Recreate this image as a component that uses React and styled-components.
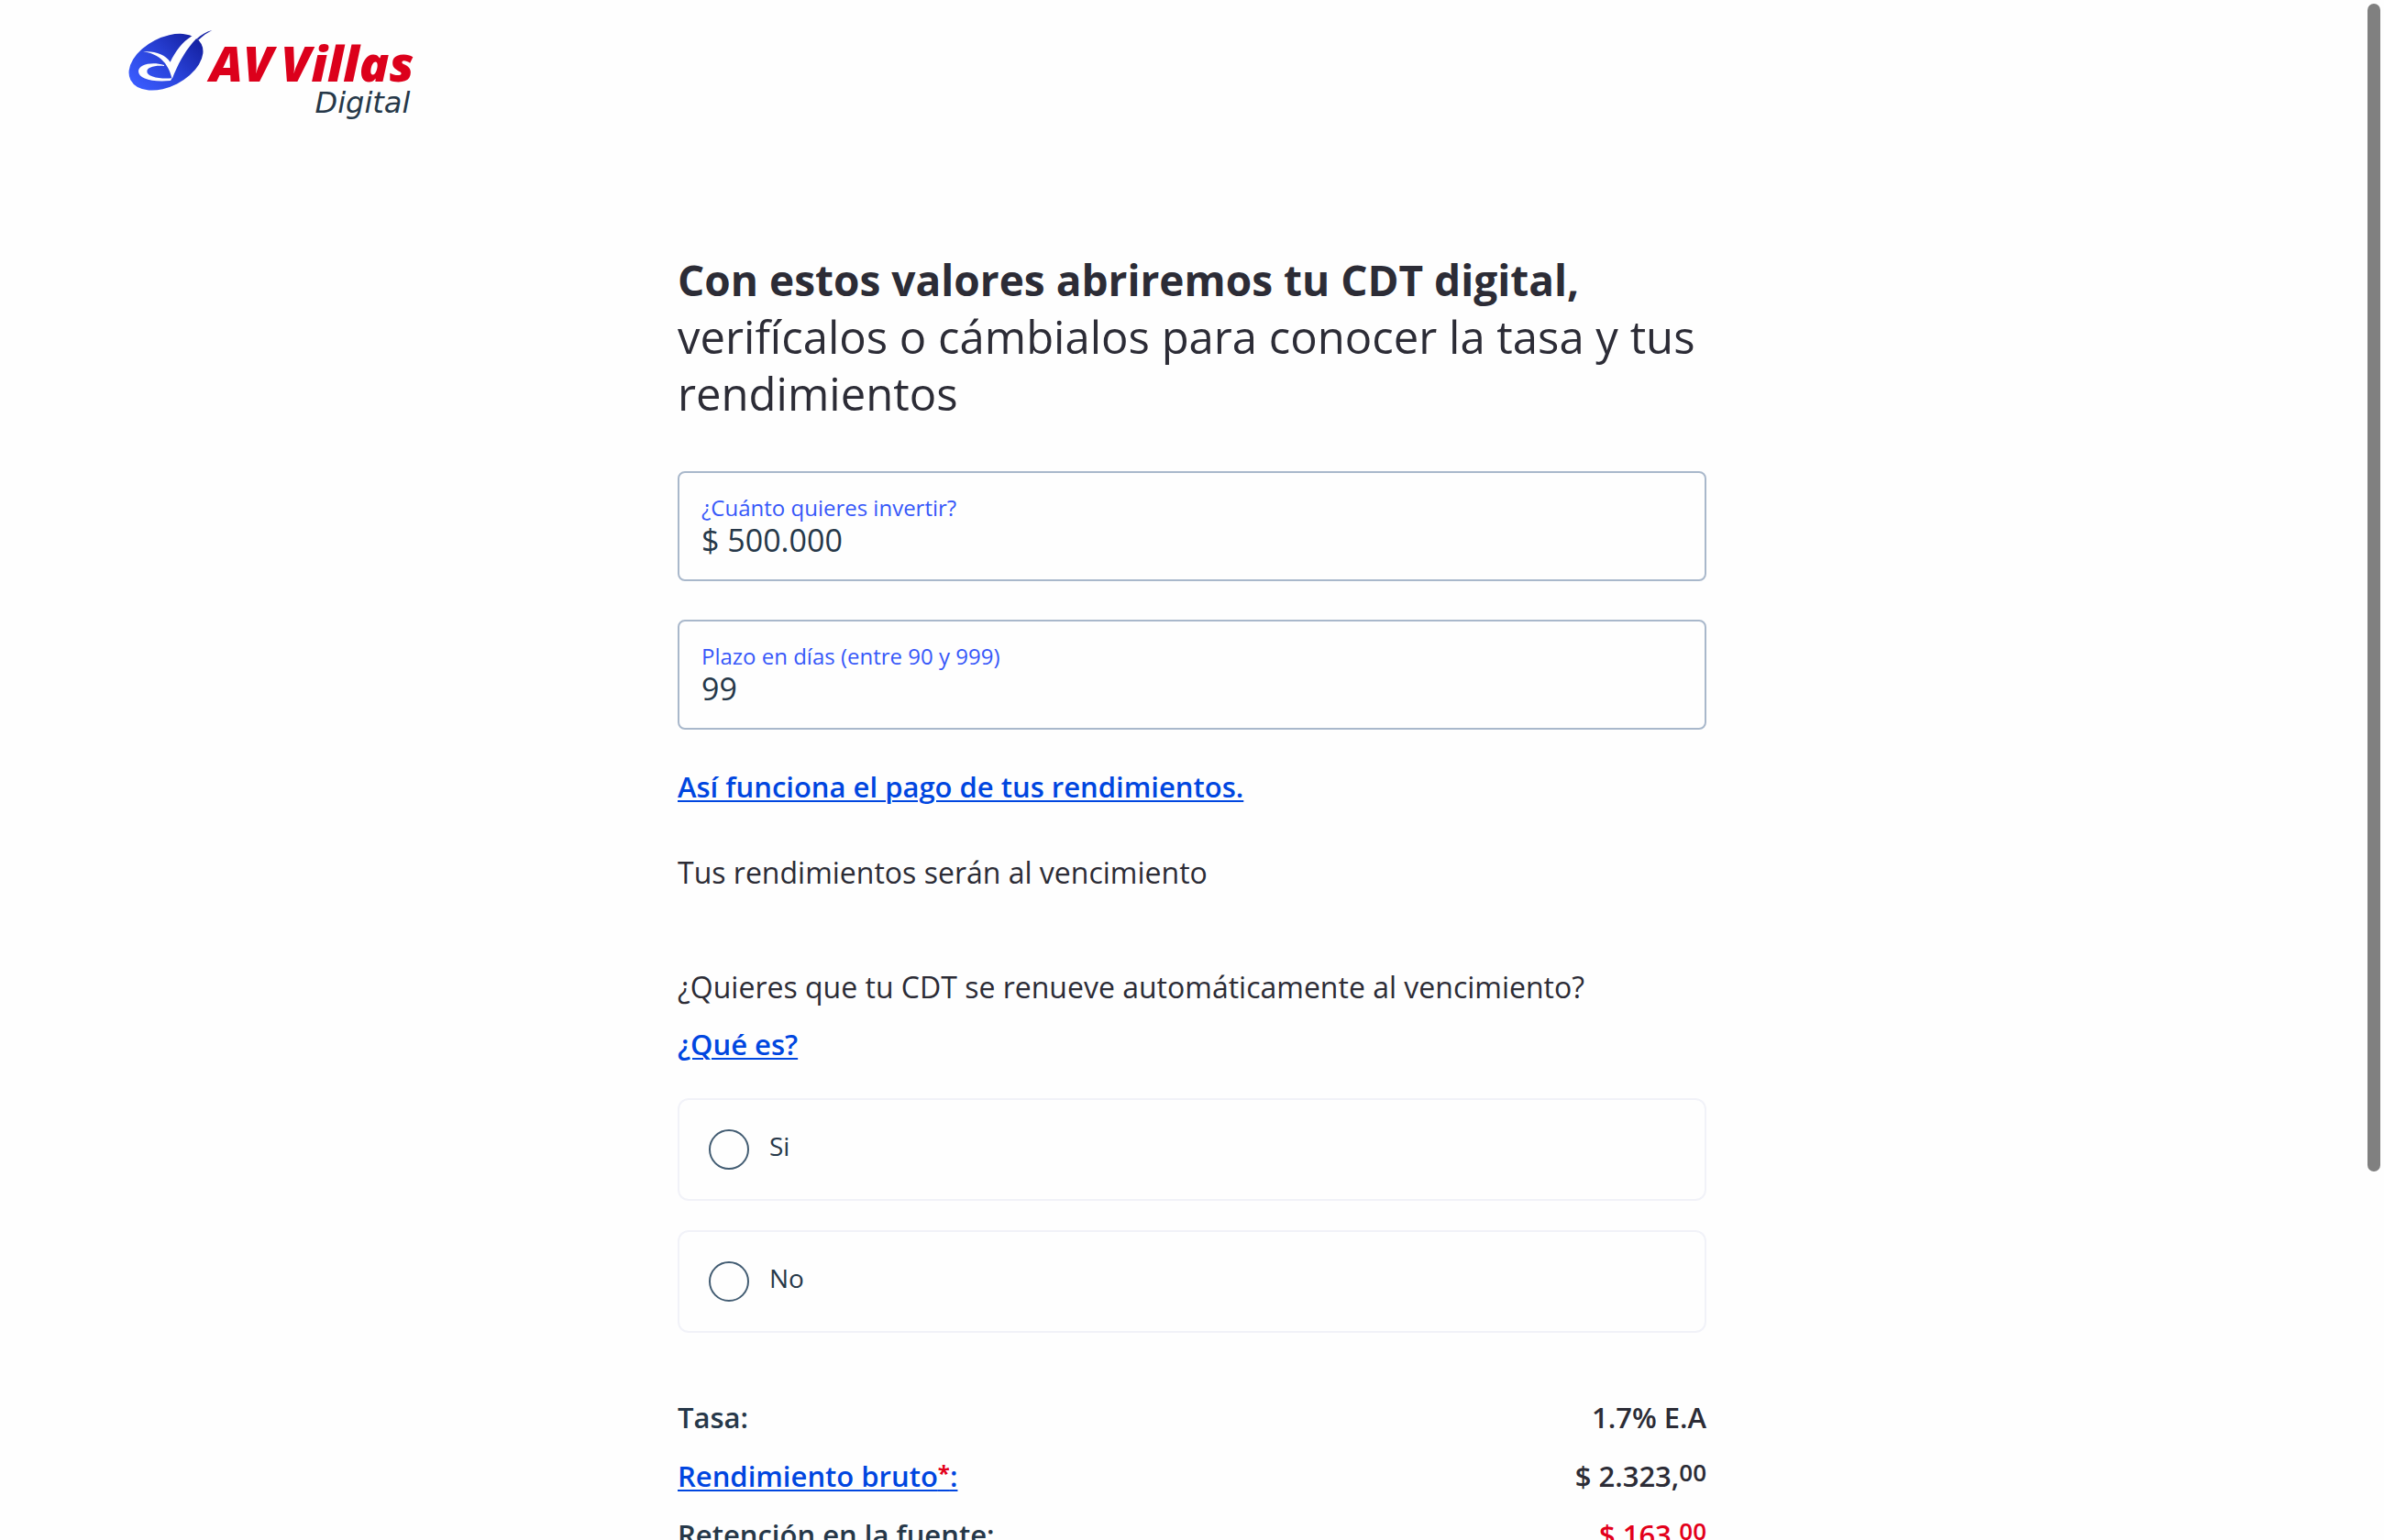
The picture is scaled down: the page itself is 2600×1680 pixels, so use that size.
import React, { useId, useState } from "react";
import styled, { createGlobalStyle } from "styled-components";

const color = {
  ink: "#2c2c36",
  navy: "#263849",
  link: "#0046e0",
  accent: "#3758f9",
  red: "#e3001b",
  logoRed: "#dc001b",
  fieldBorder: "#a9b8cb",
  optionBorder: "#f1f2f8",
  radio: "#425c72",
  thumb: "#808080",
};

const GlobalStyle = createGlobalStyle`
  *, *::before, *::after { box-sizing: border-box; }
  body {
    margin: 0;
    background: #fefefe;
    color: ${color.ink};
    font-family: "Open Sans", "Noto Sans", sans-serif;
    font-size: 32px;
  }
`;

const Page = styled.div`
  height: 100vh;
  overflow-y: auto;
  scrollbar-width: none;
`;

const ScrollThumb = styled.div`
  position: fixed;
  top: 4px;
  right: 4px;
  width: 14px;
  height: 76vh;
  max-height: 1274px;
  border-radius: 7px;
  background: ${color.thumb};
`;

const Header = styled.header`
  display: flex;
  padding: 30px 140px 0;
`;

const LogoLink = styled.a`
  display: block;
  line-height: 0;
`;

const Main = styled.main`
  width: 100%;
  max-width: 1122px;
  margin: 0 auto;
  padding-top: 140px;
`;

const Title = styled.h1`
  margin: 0 0 54px;
  font-size: 49px;
  font-weight: 400;
  line-height: 62px;

  strong {
    display: block;
    font-size: 46px;
    font-weight: 700;
  }
`;

const Fields = styled.div`
  display: flex;
  flex-direction: column;
  gap: 42px;
  margin-bottom: 42px;
`;

const FieldBox = styled.div`
  display: flex;
  flex-direction: column;
  padding: 24px 24px 22px;
  border: 2px solid ${color.fieldBorder};
  border-radius: 8px;
`;

const FieldLabel = styled.label`
  color: ${color.accent};
  font-size: 24px;
  line-height: 28px;
`;

const FieldInput = styled.input`
  width: 100%;
  height: 42px;
  padding: 0;
  border: 0;
  outline: 0;
  background: transparent;
  color: ${color.navy};
  font: inherit;
  font-size: 34px;
  line-height: 42px;
`;

const TextLink = styled.a`
  color: ${color.link};
  font-size: 31px;
  font-weight: 600;
  text-decoration: underline;
  text-decoration-thickness: 2px;
  text-underline-offset: 3px;
`;

const Paragraph = styled.p`
  margin: 0 0 54px;
  line-height: 40px;
`;

const Group = styled.fieldset`
  display: flex;
  flex-direction: column;
  gap: 32px;
  margin: 74px 0 60px;
  padding: 0;
  border: 0;
`;

const Question = styled.legend`
  margin-bottom: 28px;
  padding: 0;
  line-height: 62px;

  a {
    display: table;
  }
`;

const Option = styled.label`
  display: flex;
  align-items: center;
  gap: 22px;
  height: 112px;
  padding: 0 32px;
  border: 2px solid ${color.optionBorder};
  border-radius: 12px;
  color: ${color.navy};
  font-size: 28px;
`;

const OptionText = styled.span`
  padding-bottom: 8px;
`;

const Radio = styled.input`
  appearance: none;
  flex: none;
  width: 44px;
  height: 44px;
  margin: 0;
  border: 2px solid ${color.radio};
  border-radius: 50%;

  &:checked {
    background: radial-gradient(${color.link} 0 10px, transparent 11px);
  }
`;

const Summary = styled.table`
  width: 100%;
  border-collapse: collapse;
  font-size: 31px;
  line-height: 64px;
`;

const SummaryLabel = styled.th`
  padding: 0;
  color: ${color.navy};
  font-weight: 600;
  text-align: left;
`;

const SummaryValue = styled.td`
  padding: 0;
  color: ${(p) => (p.$negative ? color.red : color.ink)};
  font-weight: 600;
  text-align: right;
`;

const Cents = styled.sup`
  font-size: 26px;
  line-height: 0;
  vertical-align: 6px;
`;

const Asterisk = styled.span`
  color: ${color.red};
  font-size: 24px;
  font-weight: 700;
  line-height: 0;
  vertical-align: 6px;
`;

function Logo() {
  return (
    <svg width="314" height="104" viewBox="60 60 942 312" role="img" aria-label="AV Villas Digital">
      <defs>
        <linearGradient id="oval" x1="0" y1="0.6" x2="1" y2="0.4">
          <stop offset="0" stopColor="#3a5cff" />
          <stop offset="0.5" stopColor="#2942d8" />
          <stop offset="1" stopColor="#1420a0" />
        </linearGradient>
      </defs>
      <ellipse cx="183" cy="173" rx="130" ry="80" transform="rotate(-27 183 173)" fill="url(#oval)" />
      <path
        d="M108 139 C148 136 180 148 197 173 C214 138 236 108 268 88 C288 76 310 70 326 69 C300 80 284 93 271 109 C243 142 222 180 203 229 C197 203 180 148 108 139 Z"
        fill="#fefefe"
      />
      <path d="M284 97 C298 84 314 74 334 69 C318 77 304 87 289 101 Z" fill="#1824a6" />
      <path
        d="M177 183 C136 170 93 182 93 203 C93 226 134 240 198 234 C200 232 202 229 201 226 C160 229 121 221 121 204 C121 190 146 183 177 186 Z"
        fill="#fefefe"
      />
      <g fill={color.logoRed} fontFamily='"Open Sans", sans-serif' fontSize="161" fontWeight="800" fontStyle="italic">
        <text x="326" y="237">AV</text>
        <text x="994" y="237" textAnchor="end">Villas</text>
      </g>
      <text
        x="982"
        y="340"
        textAnchor="end"
        fill={color.navy}
        fontFamily='"DejaVu Sans", sans-serif'
        fontSize="96"
        fontStyle="italic"
      >
        Digital
      </text>
    </svg>
  );
}

function Field({ label, value, onChange }) {
  const id = useId();
  return (
    <FieldBox>
      <FieldLabel htmlFor={id}>{label}</FieldLabel>
      <FieldInput id={id} type="text" inputMode="numeric" value={value} onChange={(e) => onChange(e.target.value)} />
    </FieldBox>
  );
}

export default function App() {
  const [amount, setAmount] = useState("$ 500.000");
  const [days, setDays] = useState("99");
  const [renew, setRenew] = useState(null);

  return (
    <>
      <GlobalStyle />
      <Page>
        <Header>
          <LogoLink href="#inicio">
            <Logo />
          </LogoLink>
        </Header>
        <Main>
          <Title>
            <strong>Con estos valores abriremos tu CDT digital,</strong> verifícalos o cámbialos para conocer la tasa y
            tus rendimientos
          </Title>
          <Fields>
            <Field label="¿Cuánto quieres invertir?" value={amount} onChange={setAmount} />
            <Field label="Plazo en días (entre 90 y 999)" value={days} onChange={setDays} />
          </Fields>
          <Paragraph>
            <TextLink href="#pago">Así funciona el pago de tus rendimientos.</TextLink>
          </Paragraph>
          <Paragraph>Tus rendimientos serán al vencimiento</Paragraph>
          <Group>
            <Question>
              ¿Quieres que tu CDT se renueve automáticamente al vencimiento?{" "}
              <TextLink href="#renovacion">¿Qué es?</TextLink>
            </Question>
            {["Si", "No"].map((option) => (
              <Option key={option}>
                <Radio
                  type="radio"
                  name="renovacion"
                  value={option}
                  checked={renew === option}
                  onChange={() => setRenew(option)}
                />
                <OptionText>{option}</OptionText>
              </Option>
            ))}
          </Group>
          <Summary>
            <tbody>
              <tr>
                <SummaryLabel scope="row">Tasa:</SummaryLabel>
                <SummaryValue>1.7% E.A</SummaryValue>
              </tr>
              <tr>
                <SummaryLabel scope="row">
                  <TextLink href="#rendimiento">
                    Rendimiento bruto<Asterisk>*</Asterisk>:
                  </TextLink>
                </SummaryLabel>
                <SummaryValue>
                  $ 2.323,<Cents>00</Cents>
                </SummaryValue>
              </tr>
              <tr>
                <SummaryLabel scope="row">Retención en la fuente:</SummaryLabel>
                <SummaryValue $negative>
                  $ 163,<Cents>00</Cents>
                </SummaryValue>
              </tr>
            </tbody>
          </Summary>
        </Main>
      </Page>
      <ScrollThumb aria-hidden="true" />
    </>
  );
}
